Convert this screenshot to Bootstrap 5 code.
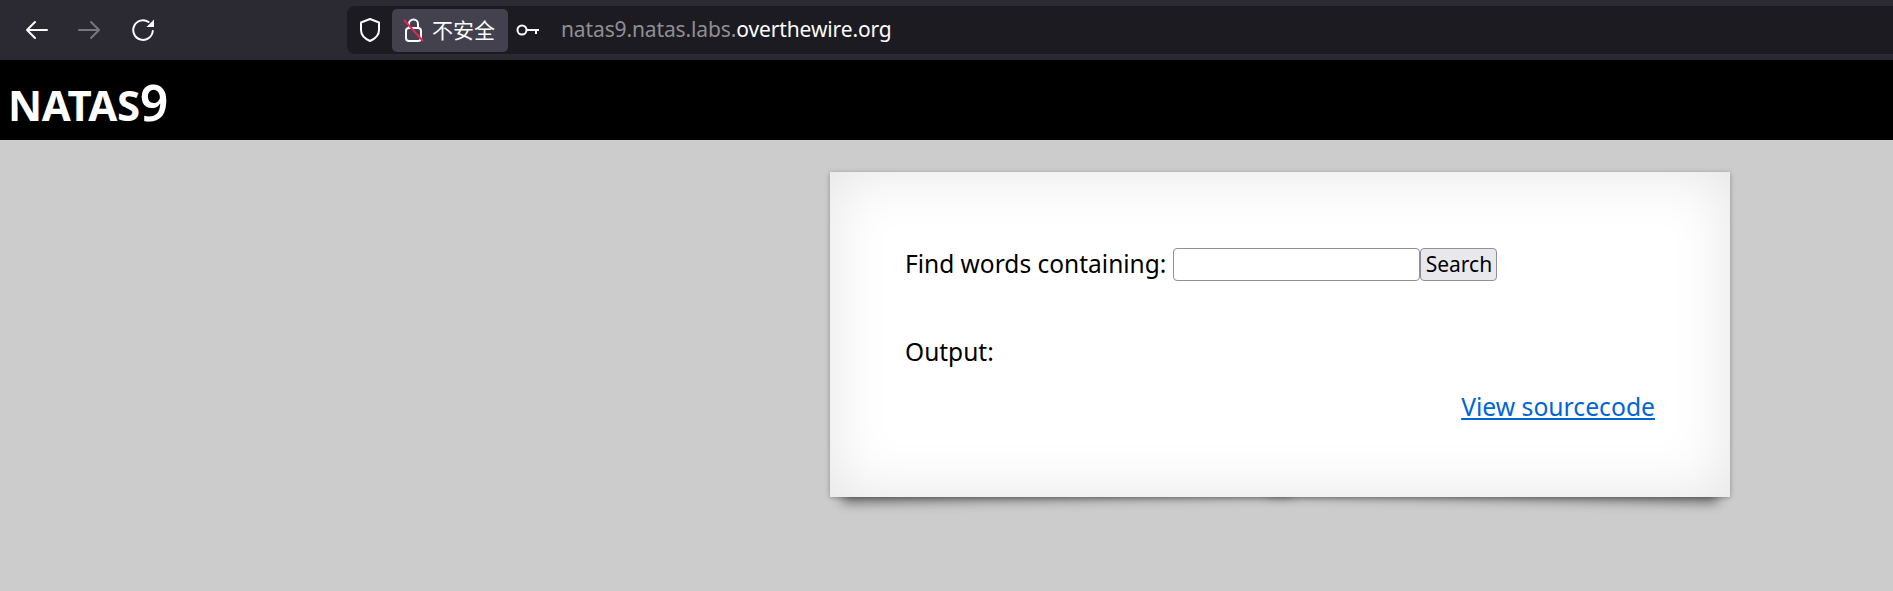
<!DOCTYPE html>
<html lang="en">
<head>
<meta charset="utf-8">
<title>natas9</title>
<link href="https://cdn.jsdelivr.net/npm/bootstrap@5.3.0/dist/css/bootstrap.min.css" rel="stylesheet">
<style>
html,body{height:591px;overflow:hidden}
body{background:#ccc;font-family:"Noto Sans","Noto Sans CJK SC",sans-serif;color:#000}
.browser-bar{height:60px;background:#2b2a33}
.tool-btn{width:54px;height:36px;padding:0;border:0;background:none;display:flex;align-items:center;justify-content:center}
.tool-group{margin-left:9px}
.url-box{margin-left:176px;height:48px;background:#1c1b22;border-radius:8px 0 0 8px;padding-left:11px}
.secure-chip{height:43px;width:116px;margin-left:10px;background:#42414d;border-radius:5px;color:#fbfbfe;font-size:21px;gap:7px;padding-left:11px;font-family:"Noto Sans CJK SC",sans-serif}
.url-text{font-size:21px;color:#8f8f94;margin-left:21px;letter-spacing:-.12px}
.url-text b{font-weight:400;color:#fbfbfe}
.site-head{height:80px;background:#000;color:#fff;padding-left:8px;font-weight:700;font-size:42px;line-height:1;padding-top:17px;letter-spacing:-.4px}
.site-head span{font-size:50px;font-weight:600;letter-spacing:0}
.paper{position:relative;width:900px;height:325px;margin:32px 0 0 830px;background:#fff;padding:75px 75px 0;font-size:24.5px;box-shadow:0 1px 5px rgba(0,0,0,.3),inset 0 0 60px rgba(0,0,0,.11)}
.paper::before,.paper::after{content:"";position:absolute;z-index:-1;bottom:12px;width:50%;height:20px;background:transparent;box-shadow:0 14px 12px rgba(0,0,0,.45)}
.paper::before{left:12px;transform:rotate(-1deg)}
.paper::after{right:12px;transform:rotate(1deg)}
.query-row{line-height:34px;height:34px}
.query-input{width:247px;height:33px;margin-left:7px;border:1px solid #8f8f9d;border-radius:4px;background:#fff;padding:0 4px;box-sizing:border-box}
.query-btn{width:77px;height:33px;padding:0;border:1px solid #8f8f9d;border-radius:4px;background:#e9e9ed;font-size:21px;color:#000;line-height:1}
.out-line{margin-top:54px;line-height:34px}
.src-link{color:#0066d6;font-size:24.7px}
.src-row{margin-top:21px;line-height:34px}
</style>
</head>
<body>
<nav class="browser-bar d-flex align-items-center">
  <div class="tool-group d-flex">
    <button class="tool-btn" aria-label="Back"><svg width="24" height="24" viewBox="0 0 24 24" fill="none" stroke="#fbfbfe" stroke-width="2" stroke-linecap="round" stroke-linejoin="round"><path d="M23 12H3M11 4l-8 8 8 8"/></svg></button>
    <button class="tool-btn" aria-label="Forward"><svg width="24" height="24" viewBox="0 0 24 24" fill="none" stroke="#77767c" stroke-width="2" stroke-linecap="round" stroke-linejoin="round"><path d="M1 12h20M13 4l8 8-8 8"/></svg></button>
    <button class="tool-btn" aria-label="Reload"><svg width="24" height="24" viewBox="0 0 24 24" fill="none"><path d="M20.8 13a9.8 9.8 0 1 1-4.2-9" stroke="#fbfbfe" stroke-width="2" stroke-linecap="round"/><path d="M22 1.5V9h-7.5z" fill="#fbfbfe"/></svg></button>
  </div>
  <div class="url-box flex-grow-1 d-flex align-items-center">
    <svg width="24" height="26" viewBox="0 0 24 26" fill="none" stroke="#fbfbfe" stroke-width="2" stroke-linejoin="round"><path d="M12 2 3 5.5V13c0 5 4.5 9 9 11 4.500-2 9-6 9-11V5.500z"/></svg>
    <div class="secure-chip d-flex align-items-center">
      <svg width="22" height="26" viewBox="0 0 22 26" fill="none"><rect x="3" y="11" width="15" height="13" rx="3" stroke="#fbfbfe" stroke-width="2"/><path d="M6 11V7a4.500 4.500 0 0 1 9 0v4" stroke="#fbfbfe" stroke-width="2"/><path d="M1 3l19 21" stroke="#e22850" stroke-width="2"/></svg>
      <span>不安全</span>
    </div>
    <svg class="ms-2" width="24" height="14" viewBox="0 0 24 14" fill="none" stroke="#fbfbfe" stroke-width="2"><circle cx="6" cy="7" r="4.500"/><path d="M11 7h12M20 7v4"/></svg>
    <div class="url-text">natas9.natas.labs.<b>overthewire.org</b></div>
  </div>
</nav>
<header class="site-head">NATAS<span>9</span></header>
<main class="paper">
  <form class="query-row d-flex align-items-center" onsubmit="return false">
    <span>Find words containing:</span><input class="query-input" type="text" aria-label="Find words containing"><button class="query-btn" type="submit">Search</button>
  </form>
  <div class="out-line">Output:</div>
  <div class="src-row text-end"><a class="src-link" href="#">View sourcecode</a></div>
</main>
<script src="https://cdn.jsdelivr.net/npm/bootstrap@5.3.0/dist/js/bootstrap.bundle.min.js"></script>
</body>
</html>
